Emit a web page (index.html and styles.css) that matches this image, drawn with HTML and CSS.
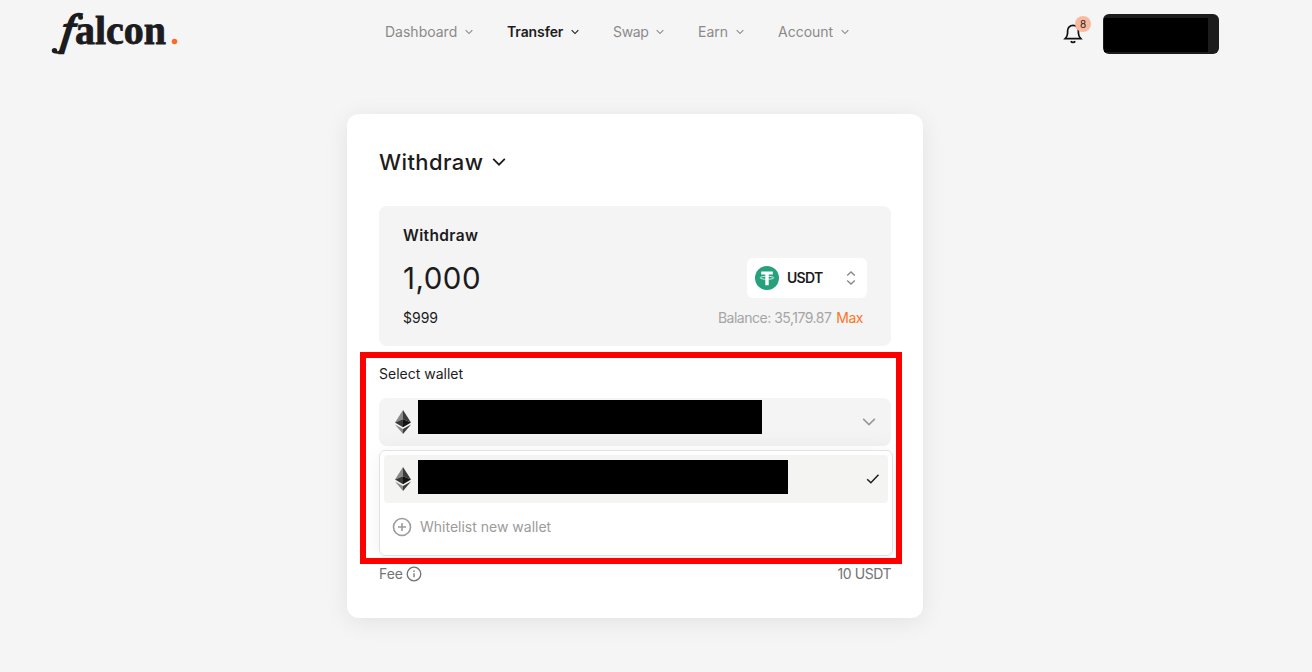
FILE: index.html
```html
<!DOCTYPE html>
<html lang="en">
<head>
<meta charset="utf-8">
<title>Falcon – Withdraw</title>
<link rel="stylesheet" href="styles.css">
</head>
<body>
<svg width="0" height="0" class="defs">
  <symbol id="chev" viewBox="0 0 12 12"><path d="M1 3.3 6 8.3 11 3.3" fill="none" stroke="currentColor"/></symbol>
  <symbol id="eth" viewBox="0 0 16 24">
    <path d="M8 0 0 12.6 8 9.2z" fill="#8a8a8a"/><path d="M8 0v9.2l8 3.4z" fill="#3c3c3b"/>
    <path d="M0 12.6 8 9.2v8z" fill="#393939"/><path d="M16 12.6 8 9.2v8z" fill="#141414"/>
    <path d="M0 14.4 8 24v-4.9z" fill="#8c8c8c"/><path d="M16 14.4 8 24v-4.9z" fill="#3c3c3b"/>
  </symbol>
</svg>
<header class="header">
  <svg class="logo" viewBox="0 0 130 48" role="img">
    <text class="logo-f" transform="translate(10 36) skewX(-7) scale(1.080 1)">f</text>
    <path class="swash" d="M4.500 44C7.500 45.300 10 44.500 12 41"/>
    <circle cx="4.500" cy="42.600" r="2.700"/>
    <circle cx="30.800" cy="9.500" r="2.300"/>
    <text class="logo-word" x="25" y="36" textLength="91" lengthAdjust="spacingAndGlyphs">alcon</text>
    <circle cx="124.500" cy="33.500" r="2.800" fill="#ff6a2b"/>
  </svg>
  <nav class="nav">
    <a class="nav-item"><span>Dashboard</span><svg><use href="#chev"/></svg></a>
    <a class="nav-item active"><span>Transfer</span><svg><use href="#chev"/></svg></a>
    <a class="nav-item"><span class="swap">Swap</span><svg><use href="#chev"/></svg></a>
    <a class="nav-item"><span>Earn</span><svg><use href="#chev"/></svg></a>
    <a class="nav-item"><span>Account</span><svg><use href="#chev"/></svg></a>
  </nav>
  <div class="bell">
    <svg width="20" height="22" viewBox="0 0 20 22" fill="none" stroke="#111" stroke-width="1.7"><path d="M2.2 16.700h15.600C16 14.800 15.400 13.500 15.400 11V8.800C15.400 5.700 13 3.300 10 3.300S4.600 5.700 4.600 8.800V11c0 2.500-.6 3.800-2.400 5.700zM7.800 19.300c1 1.500 3.400 1.500 4.400 0"/></svg>
    <span class="badge">8</span>
  </div>
  <div class="account"><div class="account-mask"></div></div>
</header>
<main class="card">
  <h1 class="title"><span>Withdraw</span><svg><use href="#chev"/></svg></h1>
  <section class="amount">
    <div class="amount-label"><span>Withdraw</span></div>
    <div class="amount-row">
      <span class="value">1,000</span>
      <div class="token">
        <svg width="24" height="24" viewBox="0 0 24 24"><circle cx="12" cy="12" r="12" fill="#26a17b"/><path d="M6.200 5.500h11.600v3.100h-4.100v10.700h-3.400V8.600H6.200z" fill="#fff"/><ellipse cx="12" cy="11.800" rx="6.800" ry="1.500" fill="none" stroke="#fff" stroke-width=".8"/></svg>
        <span class="token-name">USDT</span>
        <svg width="12" height="16" viewBox="0 0 12 16" fill="none" stroke="#858585" stroke-width="1.300"><path d="M2.200 5.500 6 2l3.800 3.500M2.200 10.500 6 14l3.800-3.500"/></svg>
      </div>
    </div>
    <div class="amount-foot"><span class="fiat">$999</span><span class="funds"><span class="balance">Balance: 35,179.87</span><span class="max">Max</span></span></div>
  </section>
  <div class="wallet-label"><span>Select wallet</span></div>
  <div class="wallet">
    <div class="select"><svg class="eth"><use href="#eth"/></svg><div class="mask mask-select"></div><svg class="select-chev"><use href="#chev"/></svg></div>
    <div class="menu">
      <div class="option"><svg class="eth"><use href="#eth"/></svg><div class="mask mask-option"></div><svg class="check" viewBox="0 0 14 12"><path d="M1.200 6.200 4.900 9.700 12.500 1.800" fill="none" stroke="#1c1c1c" stroke-width="1.500"/></svg></div>
      <div class="add"><svg width="20" height="20" viewBox="0 0 20 20" fill="none" stroke="#9b9b9b" stroke-width="1.600"><circle cx="10" cy="10" r="8.500"/><path d="M10 6v8M6 10h8"/></svg><span>Whitelist new wallet</span></div>
    </div>
    <div class="highlight"></div>
  </div>
  <div class="fee"><span class="fee-name"><span>Fee</span><svg width="16" height="16" viewBox="0 0 16 16" fill="none" stroke="#747474" stroke-width="1.300"><circle cx="8" cy="8" r="6.800"/><path d="M8 7.200v4M8 4.600v1.400"/></svg></span><span class="fee-value">10 USDT</span></div>
</main>
</body>
</html>
```
FILE: styles.css
```css
* { box-sizing: border-box; }
body { margin: 0; height: 672px; overflow: hidden; background: #f5f5f5; color: #1c1c1c; font: 14px/20px Inter, "Noto Sans", sans-serif; }
svg { display: block; flex: none; }
span { white-space: nowrap; }
.defs { position: absolute; }
.header { display: flex; height: 68px; padding-left: 50px; }
.logo { width: 130px; height: 48px; margin-top: 8px; overflow: visible; fill: #1c1c1e; stroke: #1c1c1e; font-family: "Liberation Serif", serif; font-weight: 700; }
.logo circle { stroke: none; }
.swash { fill: none; stroke-width: 2.4px; }
.logo-f { font-size: 43px; font-style: italic; font-weight: 400; stroke-width: 2px; }
.logo-word { font-size: 39px; stroke-width: .8px; }
.nav { display: grid; grid-template-columns: 122px 106px 85px 80px 80px; width: 473px; height: 20px; margin: 22px 0 0 205px; color: #8a8a8a; }
.nav-item { display: flex; align-items: center; gap: 8px; }
.nav-item svg { width: 8px; height: 8px; stroke-width: 1.7; }
.nav-item.active { color: #1c1c1c; font-weight: 600; letter-spacing: -.1px; }
.swap { letter-spacing: -.35px; }
.bell { position: relative; width: 20px; height: 22px; margin: 22px 0 0 205px; }
.badge { position: absolute; left: 12px; top: -6px; width: 16px; height: 16px; border-radius: 50%; background: #f8b99f; font-size: 10px; line-height: 16px; text-align: center; }
.account { width: 116px; height: 40px; margin: 14px 0 0 20px; padding: 4px 11px 2px 1px; border-radius: 6px; background: #1c1c1d; }
.account-mask { height: 34px; background: #000; }
.card { width: 576px; height: 504px; margin: 46px 0 0 347px; padding: 32px; border-radius: 12px; background: #fff; box-shadow: 0 4px 24px rgba(0,0,0,.08); }
.title { display: flex; align-items: center; gap: 9px; height: 32px; margin: 0 0 28px; font-size: 22px; font-weight: 500; line-height: 30px; letter-spacing: .4px; }
.title svg { width: 14px; height: 14px; stroke-width: 1.5; }
.amount { height: 140px; padding: 20px 24px; border-radius: 8px; background: #f4f4f4; }
.amount-label { height: 20px; font-size: 15.500px; font-weight: 600; line-height: 20px; letter-spacing: .35px; }
.amount-row { display: flex; justify-content: space-between; align-items: center; height: 40px; margin-top: 12px; }
.value { font-size: 29.500px; line-height: 40px; letter-spacing: .5px; }
.token { display: flex; align-items: center; width: 120px; height: 40px; padding: 0 10px 0 8px; border-radius: 6px; background: #fff; }
.token-name { flex: 1; margin-left: 8px; font-weight: 600; letter-spacing: -.7px; }
.amount-foot { display: flex; justify-content: space-between; margin-top: 10px; padding-right: 4px; }
.funds { display: flex; gap: 5px; }
.balance { color: #a5a5a5; letter-spacing: -.5px; }
.max { color: #fb7528; letter-spacing: -.5px; }
.wallet-label { height: 20px; margin: 18px 0 14px; }
.wallet { position: relative; }
.select { position: relative; display: flex; align-items: center; justify-content: space-between; height: 48px; padding: 0 15px 0 16px; border-radius: 8px; background: linear-gradient(#f4f4f4 65%, #f1f1f1); }
.eth { width: 16px; height: 24px; }
.select-chev { width: 14px; height: 14px; color: #999; stroke-width: 1.400; }
.mask { position: absolute; height: 34px; background: #000; }
.mask-select { left: 39px; top: 2px; width: 344px; }
.menu { position: absolute; z-index: 1; left: 0; top: 52px; width: 514px; height: 106px; padding: 4px; border: 1px solid #e2e2e4; border-radius: 6px; background: #fff; box-shadow: 0 4px 22px rgba(0,0,0,.06); }
.option { position: relative; display: flex; align-items: center; justify-content: space-between; width: 504px; height: 48px; padding: 0 8px 0 11px; border-radius: 4px; background: #f4f4f2; }
.mask-option { left: 34px; top: 5px; width: 370px; }
.check { width: 14px; height: 12px; }
.add { display: flex; align-items: center; gap: 8px; height: 48px; padding-left: 8px; color: #9b9b9b; }
.highlight { position: absolute; z-index: 2; left: -19px; top: -46px; width: 542px; height: 212px; border: 6px solid #f00; }
.fee { display: flex; justify-content: space-between; margin-top: 118px; color: #747474; }
.fee-name { display: flex; align-items: center; gap: 3px; }
.fee-value { letter-spacing: -.45px; }
```
